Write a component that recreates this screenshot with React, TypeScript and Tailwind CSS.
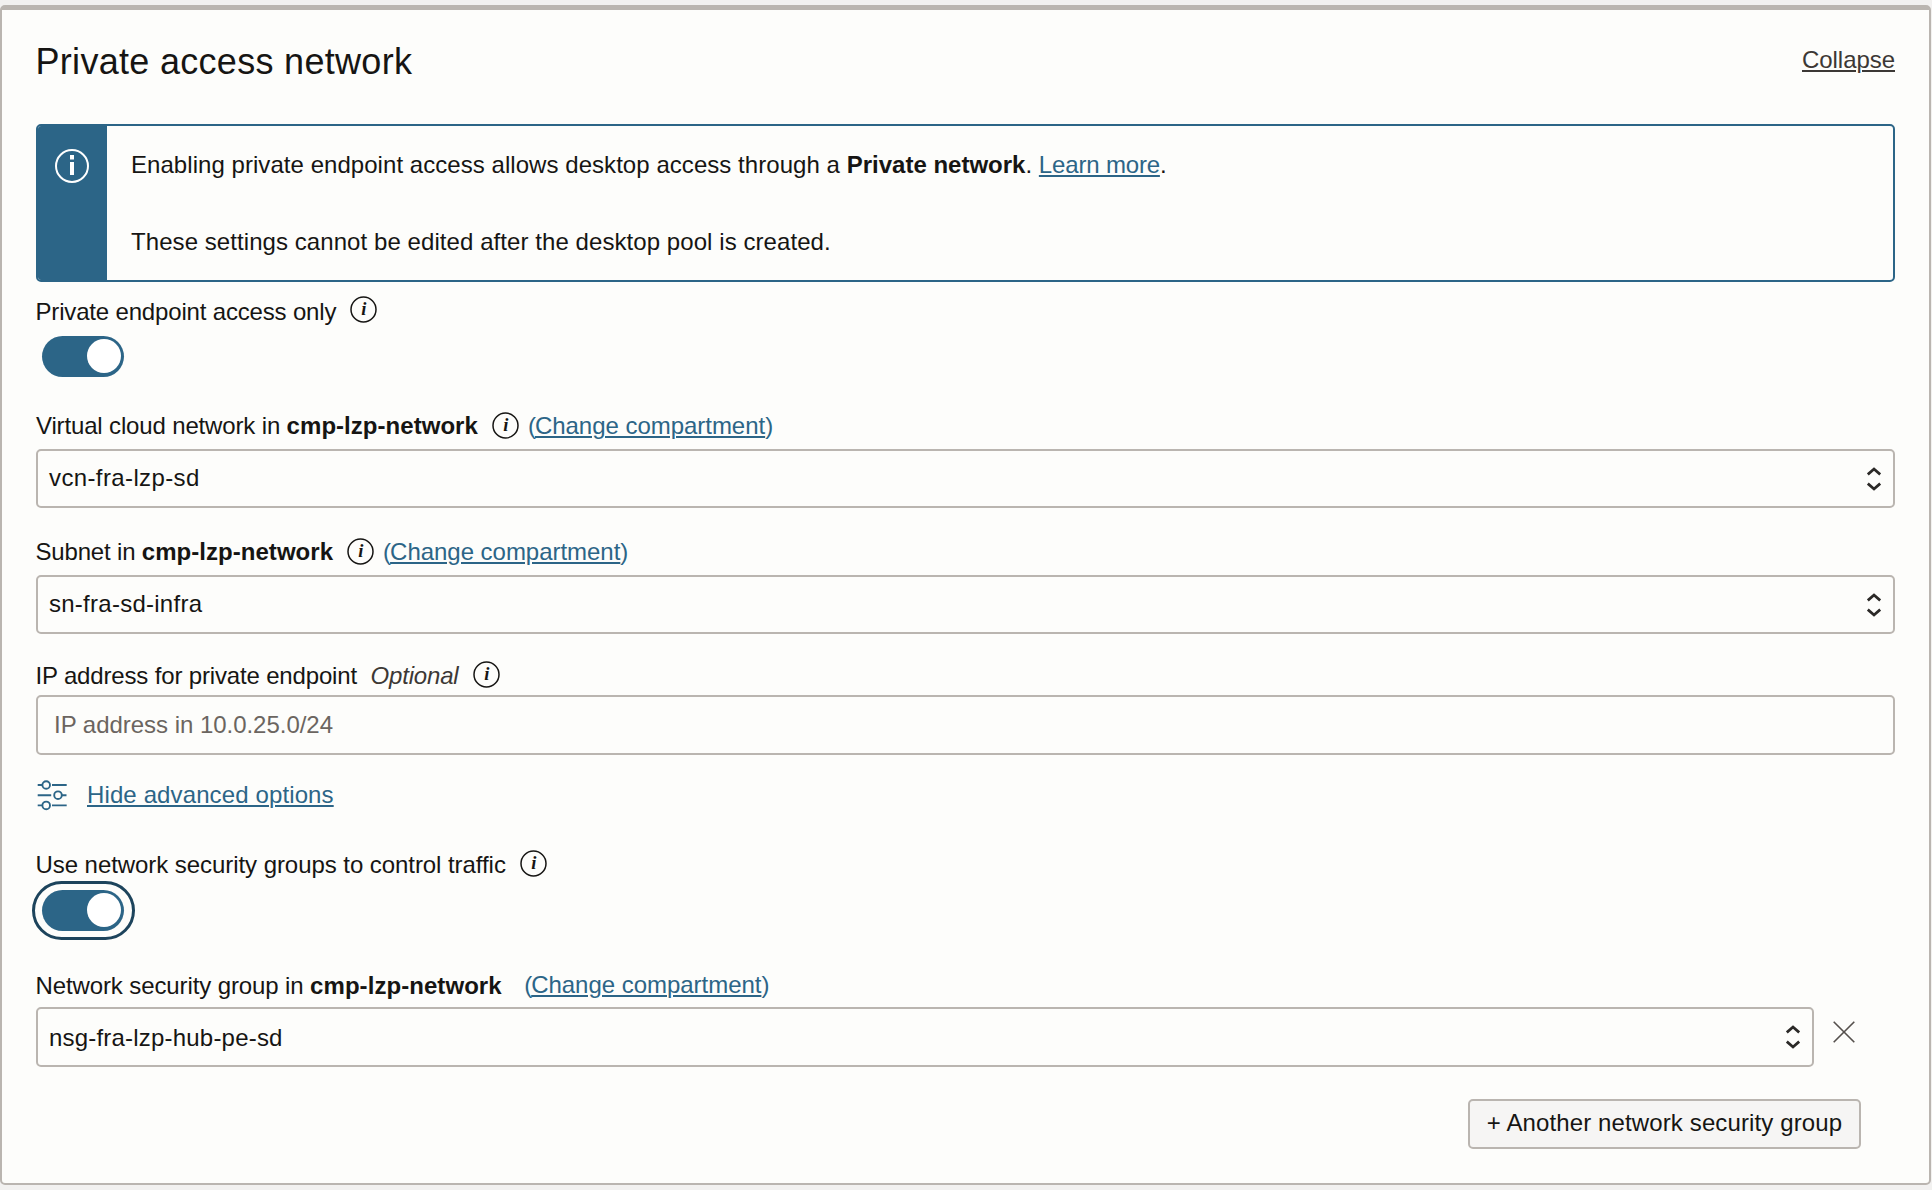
import type { ReactNode } from "react";

function InfoIcon({ className }: { className: string }) {
  return (
    <svg className={`h-[27px] w-[27px] shrink-0 ${className}`} viewBox="0 0 27 27" fill="none">
      <circle cx="13.5" cy="13.5" r="12.5" stroke="#161513" strokeWidth="1.5" />
      <text x="13.9" y="19" textAnchor="middle" fill="#161513" className="font-['Liberation_Serif',serif] text-[18.5px] font-bold italic">
        i
      </text>
    </svg>
  );
}

function Sorter() {
  return (
    <svg className="h-6 w-[14px] shrink-0" viewBox="0 0 14 24" fill="none" stroke="#2b2927" strokeWidth="2.8">
      <path d="M0.8 7.5 L7 2 L13.2 7.5" />
      <path d="M0.8 16.5 L7 22 L13.2 16.5" />
    </svg>
  );
}

function Toggle({ className = "" }: { className?: string }) {
  return (
    <button
      role="switch"
      aria-checked="true"
      className={`flex h-[41px] w-[82px] shrink-0 items-start justify-end rounded-full bg-[#2c6587] pt-[3px] pr-[3px] ${className}`}
    >
      <span className="h-[34px] w-[34px] rounded-full bg-white" />
    </button>
  );
}

function Select({ children, className }: { children: ReactNode; className: string }) {
  return (
    <div className={`flex items-center justify-between rounded-[5px] border-2 border-[#bab5b0] pr-3 pl-[11px] ${className}`}>
      {children}
      <Sorter />
    </div>
  );
}

function Change({ className }: { className: string }) {
  return (
    <a className={`tracking-[-0.03px] whitespace-nowrap text-[#2c6587] ${className}`}>
      <span className="tracking-[-1px]">(</span>
      <span className="underline decoration-2 underline-offset-[2px]">Change compartment</span>)
    </a>
  );
}

export default function App() {
  return (
    <div className="h-[1190px] w-[1932px] overflow-hidden bg-[#f2f1f0] pt-[5px] font-['Liberation_Sans',Arial,sans-serif] text-[24px] leading-[27px] text-[#161513]">
      <section className="flex h-[1180px] w-[1931px] flex-col rounded-[5px] border-2 border-t-5 border-[#bab5b0] bg-[#fdfdfb] px-[34px]">
        <header className="flex h-[114px] shrink-0 items-start justify-between">
          <h2 className="mt-[31px] -ml-[0.5px] text-[36px] leading-[41px] tracking-[0.3px]">Private access network</h2>
          <a className="mt-9 tracking-[-0.05px] text-[#3c3835] underline decoration-2 underline-offset-[2px]">Collapse</a>
        </header>

        <div className="flex h-[158px] w-[1859px] shrink-0 overflow-hidden rounded-[5px] border-2 border-[#2c6587]">
          <div className="flex w-[69px] shrink-0 bg-[#2c6587] pt-[23px] pl-[17px]">
            <svg className="h-[34px] w-[34px]" viewBox="0 0 34 34" fill="none">
              <circle cx="17" cy="17" r="16" stroke="#fff" strokeWidth="2" />
              <path d="M15 6h4v4.5h-4zM15 13h4v13h-4z" fill="#fff" />
            </svg>
          </div>
          <div className="flex flex-col pt-[25px] pl-6 whitespace-nowrap">
            <p className="tracking-[0.05px]">
              Enabling private endpoint access allows desktop access through a{" "}
              <b className="tracking-[0px]">Private network</b>.{" "}
              <a className="tracking-[-0.17px] text-[#2c6587] underline decoration-2 underline-offset-[2px]">Learn more</a>.
            </p>
            <p className="mt-[50px] tracking-[0.07px]">These settings cannot be edited after the desktop pool is created.</p>
          </div>
        </div>

        <div className="mt-4 -ml-[0.5px] flex h-[27px] shrink-0">
          <span className="tracking-[-0.17px]">Private endpoint access only</span>
          <InfoIcon className="-mt-[2px] ml-[13.5px]" />
        </div>
        <Toggle className="mt-[11px] ml-1.5" />

        <div className="mt-[35px] flex h-[27px] shrink-0 whitespace-pre">
          <span className="tracking-[-0.15px]">Virtual cloud network in </span>
          <b className="tracking-[0.04px]">cmp-lzp-network</b>
          <InfoIcon className="ml-[14px]" />
          <Change className="ml-[9px]" />
        </div>
        <Select className="mt-2.5 h-[59px] w-[1859px] shrink-0">
          <span className="-mt-[3px] tracking-[0.38px]">vcn-fra-lzp-sd</span>
        </Select>

        <div className="mt-[30px] flex h-[27px] shrink-0 whitespace-pre">
          <span className="-ml-[0.5px] tracking-[-0.18px]">Subnet in </span>
          <b className="tracking-[0.04px]">cmp-lzp-network</b>
          <InfoIcon className="ml-[14px]" />
          <Change className="ml-[9px]" />
        </div>
        <Select className="mt-2.5 h-[59px] w-[1859px] shrink-0">
          <span className="-mt-[3px] tracking-[0.26px]">sn-fra-sd-infra</span>
        </Select>

        <div className="mt-[28px] -ml-[0.5px] flex h-[27px] shrink-0 whitespace-pre">
          <span className="tracking-[-0.16px]">IP address for private endpoint</span>
          <i className="ml-[13.5px] tracking-[-0.17px] text-[#3c3835]">Optional</i>
          <InfoIcon className="-mt-px ml-[14px]" />
        </div>
        <div className="mt-[6px] flex h-[60px] w-[1859px] shrink-0 rounded-[5px] border-2 border-[#bab5b0] pt-[14px] pl-4 tracking-[-0.03px] text-[#6b6560]">
          IP address in 10.0.25.0/24
        </div>

        <div className="mt-[26px] flex h-[27px] shrink-0 text-[#2c6587]">
          <svg className="mt-[-2px] h-[32px] w-[32px]" viewBox="0 0 32 32" fill="none" stroke="#2c6587" strokeWidth="1.9">
            <path d="M1.7 6h5M16 6h14.7M1.7 16.2h13.5M25.5 16.2h5M1.7 26.4h5M16 26.4h14.7" />
            <circle cx="10.2" cy="6" r="3.8" />
            <circle cx="22" cy="16.2" r="3.8" />
            <circle cx="10.2" cy="26.4" r="3.8" />
          </svg>
          <a className="ml-[19px] tracking-[0.12px] underline decoration-2 underline-offset-[2px]">Hide advanced options</a>
        </div>

        <div className="mt-[43px] -ml-[0.5px] flex h-[27px] shrink-0">
          <span className="tracking-[-0.06px]">Use network security groups to control traffic</span>
          <InfoIcon className="-mt-px ml-[14.5px]" />
        </div>
        <div className="mt-[3px] -ml-1 h-[59px] w-[103px] shrink-0 rounded-full border-3 border-[#1d445c] pt-1.5 pl-[7px]">
          <Toggle />
        </div>

        <div className="mt-[32px] -ml-[0.5px] flex h-[27px] shrink-0 whitespace-pre">
          <span className="tracking-[-0.11px]">Network security group in </span>
          <b className="tracking-[0.06px]">cmp-lzp-network</b>
          <Change className="-mt-px ml-[22.5px]" />
        </div>
        <div className="mt-2 flex shrink-0">
          <Select className="h-[60px] w-[1778px]">
            <span className="mt-px tracking-[0.2px]">nsg-fra-lzp-hub-pe-sd</span>
          </Select>
          <svg className="mt-3.5 ml-[19px] h-[22px] w-[22px]" viewBox="0 0 22 22" stroke="#55504c" strokeWidth="1.6">
            <path d="M0.7 0.7 L21.3 21.3 M21.3 0.7 L0.7 21.3" />
          </svg>
        </div>

        <button className="mt-8 mr-[34px] flex h-[50px] w-[393px] shrink-0 justify-center self-end rounded-[5px] border-2 border-[#bab5b0] bg-[#f6f5f4] pt-[8px] tracking-[0.12px]">
          + Another network security group
        </button>
      </section>
    </div>
  );
}
